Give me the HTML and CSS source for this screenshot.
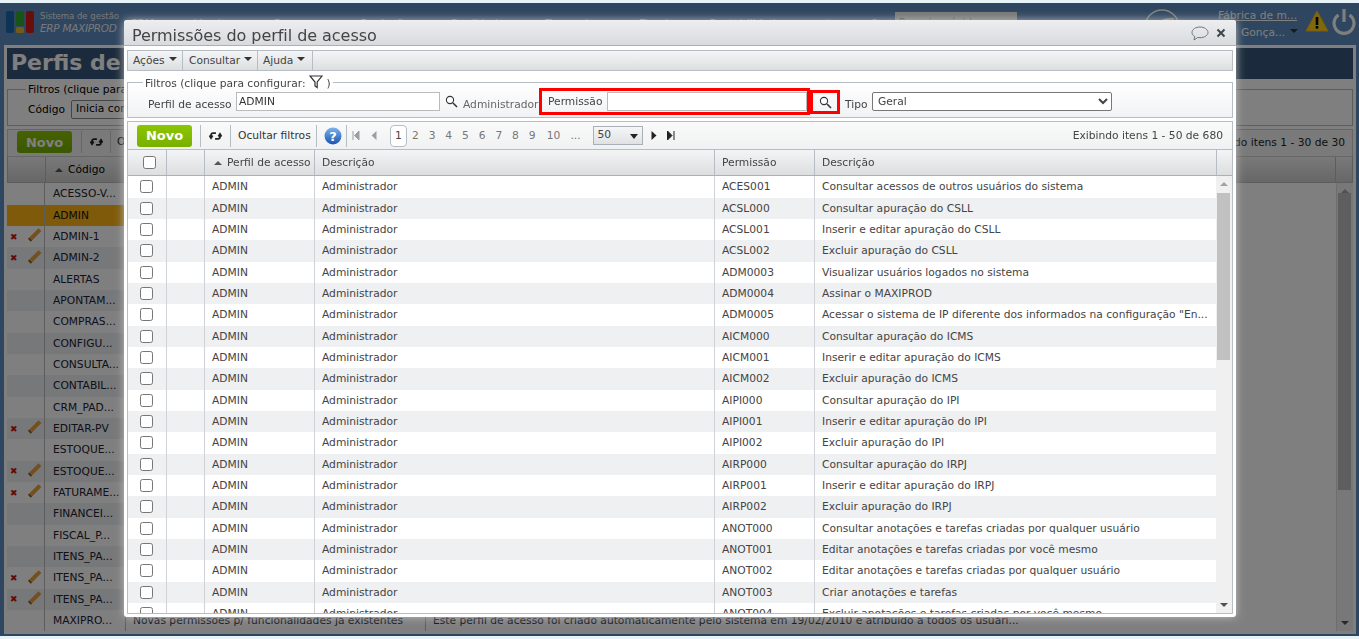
FILE: index.html
```html
<!DOCTYPE html>
<html lang="pt-BR">
<head>
<meta charset="utf-8">
<title>Permissões do perfil de acesso</title>
<link rel="stylesheet" href="styles.css">
</head>
<body>
<div class="page">
  <header class="top">
    <div class="logo">
      <svg width="30" height="23" viewBox="0 0 30 23"><rect x="0" y="0" width="8" height="22" rx="2" fill="#1a68ae"/><rect x="10" y="0" width="8" height="15" rx="2" fill="#35a82a"/><rect x="10" y="16" width="8" height="6" rx="1.500" fill="#e8b82c"/><rect x="20" y="0" width="8" height="22" rx="2" fill="#d41a1a"/></svg>
      <div class="logo-text"><span>Sistema de gestão</span><b>ERP MAXIPROD</b></div>
    </div>
    <nav class="menu"><span>CRM</span><span>Vendas</span><span>Compras</span><span>Produção</span><span>Qualidade</span><span>Financeiro</span><span>Fiscal</span><span>Contabilidade</span><span>⚙</span><span>?</span></nav>
    <div class="quick">Pesquisa rápida</div>
    <svg class="swirl" width="38" height="38" viewBox="0 0 38 38"><circle cx="19" cy="19" r="17" fill="none" stroke="#fff" stroke-width="1.500"/><path d="M7 24c6-10 14-14 24-13M10 28c6-8 12-11 20-11" fill="none" stroke="#fff" stroke-width="1.500"/></svg>
    <div class="user"><a>Fábrica de m...</a><span>Gonça...<i class="caret ucaret"></i></span></div>
    <svg class="warn" width="24" height="22" viewBox="0 0 24 22"><path d="M12 1 23 21H1Z" fill="#fdd21a" stroke="#fdb514"/><rect x="10.700" y="7" width="2.600" height="8" fill="#000"/><rect x="10.700" y="16" width="2.600" height="2.600" fill="#000"/></svg>
    <svg class="power" width="24" height="27" viewBox="0 0 24 27"><path d="M6.500 7a10 10 0 1 0 11 0" fill="none" stroke="#fff" stroke-width="3.200"/><path d="M12 1v13" stroke="#fff" stroke-width="3.200"/></svg>
  </header>
  <main class="panel">
    <h1 class="ptitle">Perfis de acesso</h1>
    <fieldset class="pfilter"><legend>Filtros (clique para configurar:)</legend><label>Código</label><span class="fake-input">Inicia com</span></fieldset>
    <div class="ptools"><button class="novo">Novo</button><span class="sep sep1"><svg width="13" height="12" viewBox="0 0 16 14"><path d="M8.500 3.500H5C3.200 3.500 2.500 4.700 2.500 6.500V9M.5 6.500 2.500 9.500 4.500 6.500M7.500 10.500H11c1.800 0 2.500-1.200 2.500-3V5M11.500 7.500l2-3 2 3" fill="none" stroke="#222" stroke-width="2.200"/></svg></span><span class="sep">Ocultar filtros</span><span class="count">Exibindo itens 1 - 30 de 30</span></div>
    <div class="phead"><span class="pc1"></span><span class="pc2"><i class="up"></i>Código</span><span class="pc3"></span><span class="pc4"></span></div>
    <div class="pbody">
      <div class="prow"><span class="pc1"></span><span class="pc2">ACESSO-V...</span></div>
      <div class="prow sel"><span class="pc1"></span><span class="pc2">ADMIN</span></div>
      <div class="prow"><span class="pc1"><i class="x">✖</i><i class="pen"></i></span><span class="pc2">ADMIN-1</span></div>
      <div class="prow"><span class="pc1"><i class="x">✖</i><i class="pen"></i></span><span class="pc2">ADMIN-2</span></div>
      <div class="prow"><span class="pc1"></span><span class="pc2">ALERTAS</span></div>
      <div class="prow"><span class="pc1"></span><span class="pc2">APONTAM...</span></div>
      <div class="prow"><span class="pc1"></span><span class="pc2">COMPRAS...</span></div>
      <div class="prow"><span class="pc1"></span><span class="pc2">CONFIGU...</span></div>
      <div class="prow"><span class="pc1"></span><span class="pc2">CONSULTA...</span></div>
      <div class="prow"><span class="pc1"></span><span class="pc2">CONTABIL...</span></div>
      <div class="prow"><span class="pc1"></span><span class="pc2">CRM_PAD...</span></div>
      <div class="prow"><span class="pc1"><i class="x">✖</i><i class="pen"></i></span><span class="pc2">EDITAR-PV</span></div>
      <div class="prow"><span class="pc1"></span><span class="pc2">ESTOQUE...</span></div>
      <div class="prow"><span class="pc1"><i class="x">✖</i><i class="pen"></i></span><span class="pc2">ESTOQUE...</span></div>
      <div class="prow"><span class="pc1"><i class="x">✖</i><i class="pen"></i></span><span class="pc2">FATURAME...</span></div>
      <div class="prow"><span class="pc1"></span><span class="pc2">FINANCEI...</span></div>
      <div class="prow"><span class="pc1"></span><span class="pc2">FISCAL_P...</span></div>
      <div class="prow"><span class="pc1"></span><span class="pc2">ITENS_PA...</span></div>
      <div class="prow"><span class="pc1"><i class="x">✖</i><i class="pen"></i></span><span class="pc2">ITENS_PA...</span></div>
      <div class="prow"><span class="pc1"><i class="x">✖</i><i class="pen"></i></span><span class="pc2">ITENS_PA...</span></div>
      <div class="prow"><span class="pc1"></span><span class="pc2">MAXIPRO...</span><span class="pc3">Novas permissões p/ funcionalidades já existentes</span><span class="pc4">Este perfil de acesso foi criado automaticamente pelo sistema em 19/02/2010 e atribuído a todos os usuári...</span></div>
      <div class="pscroll"><i class="arrow-up"></i><i class="pthumb"></i><i class="arrow-down"></i></div>
    </div>
  </main>
</div>
<div class="overlay"></div>
<section class="modal">
  <div class="mtitle"><h2>Permissões do perfil de acesso</h2>
    <svg class="bubble" width="18" height="15" viewBox="0 0 18 15"><path d="M9 1C4.600 1 1 3.400 1 6.500c0 1.700 1.100 3.100 2.800 4.100L3 14l3.600-2.500c.8.100 1.600.2 2.400.2 4.400 0 8-2.300 8-5.200S13.400 1 9 1Z" fill="none" stroke="#6d7680"/></svg>
    <svg class="close" width="10" height="10" viewBox="0 0 10 10"><path d="M1.500 1.500l7 7M8.500 1.500l-7 7" stroke="#3d454d" stroke-width="2"/></svg>
  </div>
  <div class="mmenu"><span class="m1">Ações <i class="caret"></i></span><span class="m2">Consultar <i class="caret"></i></span><span class="m3">Ajuda <i class="caret"></i></span></div>
  <fieldset class="mfilter">
    <legend>Filtros (clique para configurar: <svg class="funnel" width="14" height="14" viewBox="0 0 14 14"><path d="M1 1h12L8.200 7v5.500L6 11V7Z" fill="none" stroke="#333" stroke-width="1.200"/></svg> )</legend>
    <label class="l1">Perfil de acesso</label><span class="inp i1">ADMIN</span>
    <svg class="lens" width="13" height="13" viewBox="0 0 13 13"><circle cx="5" cy="5" r="3.600" fill="#fff" stroke="#333" stroke-width="1.100"/><path d="M8 8l4 4" stroke="#333" stroke-width="1.600"/></svg>
    <span class="adm">Administrador</span>
    <div class="red red1"><label>Permissão</label><span class="inp i2"></span></div>
    <div class="red red2"><svg class="lens" width="13" height="13" viewBox="0 0 13 13"><circle cx="5" cy="5" r="3.600" fill="#fff" stroke="#333" stroke-width="1.100"/><path d="M8 8l4 4" stroke="#333" stroke-width="1.600"/></svg></div>
    <label class="l3">Tipo</label>
    <select class="tipo"><option>Geral</option></select>
  </fieldset>
  <div class="mtools">
    <button class="novo">Novo</button>
    <span class="tsep t1"><svg width="13" height="12" viewBox="0 0 16 14"><path d="M8.500 3.500H5C3.200 3.500 2.500 4.700 2.500 6.500V9M.5 6.500 2.500 9.500 4.500 6.500M7.500 10.500H11c1.800 0 2.500-1.200 2.500-3V5M11.500 7.500l2-3 2 3" fill="none" stroke="#222" stroke-width="2.200"/></svg></span>
    <span class="tsep t2">Ocultar filtros</span>
    <span class="tsep t3"><svg width="18" height="18" viewBox="0 0 18 18"><defs><linearGradient id="hb" x1="0" y1="0" x2="0" y2="1"><stop offset="0" stop-color="#7fb2ee"/><stop offset="1" stop-color="#1556b0"/></linearGradient></defs><circle cx="9" cy="9" r="8.500" fill="url(#hb)"/><text x="9" y="13.500" text-anchor="middle" class="qm">?</text></svg></span>
    <div class="pager">
      <svg width="8" height="9" viewBox="0 0 8 9"><path d="M1 0v9M7 0v9L2.500 4.500Z" stroke="#9aa0a6" fill="#9aa0a6"/></svg>
      <svg class="pprev" width="6" height="9" viewBox="0 0 6 9"><path d="M5.500 0v9L.5 4.500Z" fill="#9aa0a6"/></svg>
      <span class="pg cur">1</span><span class="pg">2</span><span class="pg">3</span><span class="pg">4</span><span class="pg">5</span><span class="pg">6</span><span class="pg">7</span><span class="pg">8</span><span class="pg">9</span><span class="pg pg10">10</span><span class="pg pgd">...</span>
      <span class="psize">50<i class="caret dark"></i></span>
      <svg class="pnext" width="6" height="9" viewBox="0 0 6 9"><path d="M.5 0v9l5-4.500Z" fill="#222"/></svg>
      <svg class="plast" width="8" height="9" viewBox="0 0 8 9"><path d="M.5 0v9L5 4.500ZM7 0v9" stroke="#222" fill="#222"/></svg>
    </div>
    <span class="mcount">Exibindo itens 1 - 50 de 680</span>
  </div>
  <div class="grid">
    <div class="ghead">
      <span class="c0"><i class="cb"></i></span><span class="c1"></span><span class="c2"><i class="up"></i>Perfil de acesso</span><span class="c3">Descrição</span><span class="c4">Permissão</span><span class="c5">Descrição</span><span class="c6"></span>
    </div>
    <div class="gbody">
      <div class="rows">
        <div class="row"><span class="c0"><i class="cb"></i></span><span class="c1"></span><span class="c2">ADMIN</span><span class="c3">Administrador</span><span class="c4">ACES001</span><span class="c5">Consultar acessos de outros usuários do sistema</span></div>
        <div class="row"><span class="c0"><i class="cb"></i></span><span class="c1"></span><span class="c2">ADMIN</span><span class="c3">Administrador</span><span class="c4">ACSL000</span><span class="c5">Consultar apuração do CSLL</span></div>
        <div class="row"><span class="c0"><i class="cb"></i></span><span class="c1"></span><span class="c2">ADMIN</span><span class="c3">Administrador</span><span class="c4">ACSL001</span><span class="c5">Inserir e editar apuração do CSLL</span></div>
        <div class="row"><span class="c0"><i class="cb"></i></span><span class="c1"></span><span class="c2">ADMIN</span><span class="c3">Administrador</span><span class="c4">ACSL002</span><span class="c5">Excluir apuração do CSLL</span></div>
        <div class="row"><span class="c0"><i class="cb"></i></span><span class="c1"></span><span class="c2">ADMIN</span><span class="c3">Administrador</span><span class="c4">ADM0003</span><span class="c5">Visualizar usuários logados no sistema</span></div>
        <div class="row"><span class="c0"><i class="cb"></i></span><span class="c1"></span><span class="c2">ADMIN</span><span class="c3">Administrador</span><span class="c4">ADM0004</span><span class="c5">Assinar o MAXIPROD</span></div>
        <div class="row"><span class="c0"><i class="cb"></i></span><span class="c1"></span><span class="c2">ADMIN</span><span class="c3">Administrador</span><span class="c4">ADM0005</span><span class="c5">Acessar o sistema de IP diferente dos informados na configuração "En...</span></div>
        <div class="row"><span class="c0"><i class="cb"></i></span><span class="c1"></span><span class="c2">ADMIN</span><span class="c3">Administrador</span><span class="c4">AICM000</span><span class="c5">Consultar apuração do ICMS</span></div>
        <div class="row"><span class="c0"><i class="cb"></i></span><span class="c1"></span><span class="c2">ADMIN</span><span class="c3">Administrador</span><span class="c4">AICM001</span><span class="c5">Inserir e editar apuração do ICMS</span></div>
        <div class="row"><span class="c0"><i class="cb"></i></span><span class="c1"></span><span class="c2">ADMIN</span><span class="c3">Administrador</span><span class="c4">AICM002</span><span class="c5">Excluir apuração do ICMS</span></div>
        <div class="row"><span class="c0"><i class="cb"></i></span><span class="c1"></span><span class="c2">ADMIN</span><span class="c3">Administrador</span><span class="c4">AIPI000</span><span class="c5">Consultar apuração do IPI</span></div>
        <div class="row"><span class="c0"><i class="cb"></i></span><span class="c1"></span><span class="c2">ADMIN</span><span class="c3">Administrador</span><span class="c4">AIPI001</span><span class="c5">Inserir e editar apuração do IPI</span></div>
        <div class="row"><span class="c0"><i class="cb"></i></span><span class="c1"></span><span class="c2">ADMIN</span><span class="c3">Administrador</span><span class="c4">AIPI002</span><span class="c5">Excluir apuração do IPI</span></div>
        <div class="row"><span class="c0"><i class="cb"></i></span><span class="c1"></span><span class="c2">ADMIN</span><span class="c3">Administrador</span><span class="c4">AIRP000</span><span class="c5">Consultar apuração do IRPJ</span></div>
        <div class="row"><span class="c0"><i class="cb"></i></span><span class="c1"></span><span class="c2">ADMIN</span><span class="c3">Administrador</span><span class="c4">AIRP001</span><span class="c5">Inserir e editar apuração do IRPJ</span></div>
        <div class="row"><span class="c0"><i class="cb"></i></span><span class="c1"></span><span class="c2">ADMIN</span><span class="c3">Administrador</span><span class="c4">AIRP002</span><span class="c5">Excluir apuração do IRPJ</span></div>
        <div class="row"><span class="c0"><i class="cb"></i></span><span class="c1"></span><span class="c2">ADMIN</span><span class="c3">Administrador</span><span class="c4">ANOT000</span><span class="c5">Consultar anotações e tarefas criadas por qualquer usuário</span></div>
        <div class="row"><span class="c0"><i class="cb"></i></span><span class="c1"></span><span class="c2">ADMIN</span><span class="c3">Administrador</span><span class="c4">ANOT001</span><span class="c5">Editar anotações e tarefas criadas por você mesmo</span></div>
        <div class="row"><span class="c0"><i class="cb"></i></span><span class="c1"></span><span class="c2">ADMIN</span><span class="c3">Administrador</span><span class="c4">ANOT002</span><span class="c5">Editar anotações e tarefas criadas por qualquer usuário</span></div>
        <div class="row"><span class="c0"><i class="cb"></i></span><span class="c1"></span><span class="c2">ADMIN</span><span class="c3">Administrador</span><span class="c4">ANOT003</span><span class="c5">Criar anotações e tarefas</span></div>
        <div class="row"><span class="c0"><i class="cb"></i></span><span class="c1"></span><span class="c2">ADMIN</span><span class="c3">Administrador</span><span class="c4">ANOT004</span><span class="c5">Excluir anotações e tarefas criadas por você mesmo</span></div>
      </div>
      <div class="scroll"><i class="arrow-up"></i><i class="thumb"></i><i class="arrow-down"></i></div>
    </div>
  </div>
</section>
</body>
</html>
```
FILE: styles.css
```css
* { box-sizing: border-box; }
html, body { margin: 0; height: 100%; overflow: hidden; background: #e6f3f8; }
body, button, select { font-family: "DejaVu Sans", sans-serif; font-size: 10.7px; }
i { font-style: normal; }
.page { height: 639px; padding: 3px 0; overflow: hidden; display: flex; flex-direction: column; background: #5c8cc0; background-clip: content-box; }
.top { height: 41px; flex: none; display: flex; align-items: flex-start; color: #fff; }
.logo { display: flex; gap: 4px; padding: 8px 0 0 6px; width: 130px; flex: none; }
.logo-text { display: flex; flex-direction: column; font-size: 8.500px; color: #f0f0f0; line-height: 12px; white-space: nowrap; margin-top: -1px; }
.logo-text b { font-style: italic; font-weight: 400; font-size: 10.500px; color: #f0f0f0; letter-spacing: -.3px; }
.menu { display: flex; gap: 22px; padding-top: 14px; width: 765px; flex: none; color: #fff; white-space: nowrap; overflow: hidden; }
.menu span::after { content: ""; display: inline-block; margin-left: 10px; border: 4px solid transparent; border-top: 5px solid #fff; border-bottom: 0; vertical-align: 2px; }
.quick { width: 122px; height: 20px; margin-top: 9px; background: #f0f0f0; color: #888; font-size: 10px; padding: 5px 0 0 4px; flex: none; }
.swirl { margin: 5px 0 0 126px; flex: none; }
.user { margin-left: 37px; width: 81px; flex: none; display: flex; flex-direction: column; line-height: 17px; padding-top: 4px; white-space: nowrap; }
.user a { text-decoration: underline; }
.user span { display: flex; align-items: center; gap: 5px; padding-left: 23px; }
.ucaret { border-top-color: #fff; }
.warn { margin: 7px 0 0 6px; flex: none; }
.power { margin: 5px 0 0 3px; flex: none; }
.panel { flex: 1; margin: 1px 3px 2px 4px; border: 3px solid #fff; background: #fff; display: flex; flex-direction: column; min-height: 0; }
.ptitle { margin: 0; height: 31px; flex: none; background: #36577a; color: #fff; font-size: 22px; line-height: 30px; padding-left: 4px; font-family: "DejaVu Sans", sans-serif; }
.pfilter { margin: 4px 0 0; height: 43px; flex: none; border: 1px solid #bbb; padding: 4px 0 0 20px; display: flex; align-items: center; gap: 6px; }
.pfilter legend { padding: 0 2px; margin-left: -2px; }
.fake-input { border: 1px solid #888; padding: 1px 4px; width: 200px; height: 19px; border-radius: 2px; }
.ptools { height: 28px; flex: none; margin-top: 3px; border: 1px solid #ccc; display: flex; align-items: center; padding: 0 0 2px 9px; background: #f4f4f4; }
.count { margin-left: auto; padding-right: 7px; color: #222; }
.sep { padding: 0 6px; border-left: 1px solid #ccc; height: 22px; line-height: 22px; display: flex; align-items: center; white-space: nowrap; }
.sep1 { margin-left: 9px; width: 29px; padding-left: 8px; }
.phead { height: 26px; flex: none; background: linear-gradient(#f2f2f2, #cfcfcf); display: flex; align-items: center; border: 1px solid #bbb; border-top: 0; }
.pbody { flex: 1; position: relative; overflow: hidden; padding-top: .33px; }
.prow { height: 21.330px; display: flex; align-items: center; color: #223; background: #fff; }
.prow .pc1, .prow .pc2 { height: 100%; display: flex; align-items: center; background: #fff; }
.prow:nth-child(even) .pc1, .prow:nth-child(even) .pc2 { background: #eff0f2; }
.prow.sel .pc1, .prow.sel .pc2 { background: #fdb514; color: #111; }
.pc1 { width: 38px; flex: none; border-right: 1px solid #bbb; height: 100%; display: flex; align-items: center; gap: 9px; padding-left: 3px; }
.pc2 { width: 80px; flex: none; padding-left: 8px; white-space: nowrap; overflow: hidden; }
.phead .pc2 { display: flex; align-items: center; padding-left: 9px; }
.pc3 { width: 300px; flex: none; border-left: 1px solid #bbb; height: 100%; padding-left: 7px; line-height: 21px; white-space: nowrap; overflow: hidden; }
.pc4 { flex: 1; border-left: 1px solid #bbb; padding-left: 7px; height: 100%; line-height: 21px; white-space: nowrap; overflow: hidden; }
.phead .pc4 { border-right: 1px solid #bbb; margin-right: 16px; }
.x { color: #c41414; font-size: 9px; }
.pen { width: 15px; height: 3.500px; background: linear-gradient(90deg, #8a5a20 0 2px, #e6a040 2px); transform: rotate(-45deg); display: block; margin-top: -3px; }
.pscroll { position: absolute; top: 0; right: 0; bottom: 0; width: 17px; background: #f0f0f0; border-left: 1px solid #ddd; }
.pthumb { position: absolute; top: 10px; bottom: 141px; left: 1px; right: 2px; background: #bdbdbd; }
.overlay { position: fixed; left: 0; right: 0; top: 3px; bottom: 3px; background: rgba(0,0,0,.5); }
.modal { position: fixed; left: 124px; top: 20px; width: 1112px; height: 597px; background: #fff; border-radius: 3px; padding: 0 3px 3px; display: flex; flex-direction: column; box-shadow: 0 0 10px rgba(255,255,255,.7), 0 0 12px rgba(0,0,0,.3); color: #444; }
.mtitle { height: 26px; flex: none; margin: 0 -3px; background: linear-gradient(#eceef0, #d8dadd); border-bottom: 1px solid #a9b0b8; display: flex; align-items: center; padding: 5px 10px 0 8px; border-radius: 3px 3px 0 0; }
.mtitle h2 { margin: 0; font-weight: 400; font-size: 16px; color: #444; flex: 1; letter-spacing: -.05px; }
.bubble { margin-top: -4px; }
.close { margin: -4px 0 0 7px; }
.mmenu { height: 21px; flex: none; margin-top: 4px; background: linear-gradient(#f4f5f6, #dcdee0); border: 1px solid #b7bdc4; display: flex; }
.mmenu span { padding-left: 5px; border-right: 1px solid #b7bdc4; line-height: 20px; display: flex; align-items: center; gap: 4px; }
.m1 { width: 55px; }
.mmenu .m2 { width: 75px; padding-left: 6px; }
.m3 { width: 55px; }
.caret { display: inline-block; width: 0; height: 0; border: 4px solid transparent; border-top: 4px solid #333; border-bottom: 0; margin-top: -3px; }
.mfilter { position: relative; margin: 4px 0 0; height: 43px; flex: none; border: 1px solid #b7bdc4; padding: 0; background: linear-gradient(#fff, #f1f2f4); display: block; }
.mfilter legend { margin-left: 15px; padding: 0 2px; line-height: 13px; white-space: nowrap; }
.funnel { vertical-align: -2px; }
.mfilter > .lens, .mfilter > label, .mfilter > .inp, .adm, .red, .tipo { position: absolute; }
.l1 { left: 20px; top: 8px; }
.inp { background: #fff; border: 1px solid #bbb; height: 19px; line-height: 17px; padding: 0 2px; color: #333; display: block; }
.i1 { left: 108px; top: 2px; width: 204px; }
.mfilter > .lens { left: 317px; top: 5px; }
.adm { left: 335px; top: 8px; color: #666; }
.red { border: 3px solid #f00; }
.red1 { left: 411px; top: -2px; width: 271px; height: 27px; display: flex; align-items: center; padding-left: 6px; }
.red1 label { width: 59px; flex: none; color: #444; }
.i2 { flex: none; width: 200px; margin-top: -1px; height: 19px; }
.red2 { left: 682px; top: 0; width: 30px; height: 24px; display: flex; align-items: center; justify-content: center; }
.l3 { left: 717px; top: 8px; }
.tipo { left: 744px; top: 2px; width: 240px; height: 19px; padding-left: 1px; background: #fff; border: 1px solid #777; border-radius: 2px; color: #444; }
.mtools { height: 28px; flex: none; margin-top: 3px; border: 1px solid #b7bdc4; border-bottom: 0; display: flex; align-items: center; background: linear-gradient(#fafafa, #f0f1f2); padding-left: 9px; }
.novo { width: 55px; height: 22px; flex: none; border: 0; border-radius: 3px; background: linear-gradient(#8cc500, #78b000); color: #fff; font-weight: 700; font-size: 13px; font-family: "DejaVu Sans", sans-serif; padding: 0; }
.tsep { border-left: 1px solid #b7bdc4; height: 22px; display: flex; align-items: center; flex: none; white-space: nowrap; }
.t1 { margin-left: 8px; width: 30px; padding-left: 8px; }
.t2 { width: 86px; padding-left: 7px; color: #333; }
.t3 { width: 30px; padding-left: 7px; }
.qm { fill: #fff; font-weight: 700; font-size: 13px; font-family: "DejaVu Sans", sans-serif; }
.pager { display: flex; align-items: center; border-left: 1px solid #b7bdc4; height: 22px; padding-left: 5px; color: #777; }
.pprev { margin-left: 11px; }
.pg { width: 16.700px; text-align: center; }
.pg.cur { width: 17px; height: 22px; border: 1px solid #b7bdc4; border-radius: 4px; line-height: 20px; margin-left: 13px; color: #444; background: #fff; }
.pg10 { width: 22px; margin-left: 2px; }
.pgd { width: 22px; }
.psize { width: 50px; height: 19px; margin-left: 6px; border: 1px solid #a9b0b8; background: linear-gradient(#f5f6f7, #dfe1e3); display: flex; align-items: center; justify-content: space-between; padding: 0 4px 2px; color: #444; }
.caret.dark { border-width: 5px 4px 0; margin-top: 4px; border-top-color: #222; }
.pnext { margin-left: 8px; }
.plast { margin-left: 10px; }
.mcount { margin-left: auto; padding-right: 9px; color: #444; }
.grid { flex: 1; min-height: 0; display: flex; flex-direction: column; border: 1px solid #b7bdc4; }
.ghead { height: 26px; flex: none; display: flex; background: linear-gradient(#f3f4f5, #dcdee0); border-bottom: 1px solid #a9b0b8; }
.ghead > span { display: flex; align-items: center; border-right: 1px solid #b7bdc4; white-space: nowrap; overflow: hidden; }
.c0 { width: 39px; flex: none; }
.c1 { width: 38px; flex: none; }
.c2 { width: 110px; flex: none; padding-left: 7px; }
.c3 { width: 400px; flex: none; padding-left: 7px; }
.c4 { width: 100px; flex: none; padding-left: 7px; }
.c5 { flex: 1; padding-left: 7px; min-width: 0; }
.c6 { width: 16px; flex: none; border-right: 0 !important; }
.ghead .c5 { width: 402px; flex: none; }
.ghead .c0 { padding-left: 15px; }
.ghead .c2 { padding-left: 9px; }
.up { display: inline-block; width: 0; height: 0; border: 4px solid transparent; border-bottom: 4px solid #555; border-top: 0; margin-right: 5px; flex: none; }
.cb { display: block; width: 13px; height: 13px; border: 1px solid #767676; border-radius: 2.500px; background: #fff; }
.gbody { flex: 1; min-height: 0; display: flex; overflow: hidden; }
.rows { flex: 1; min-width: 0; overflow: hidden; padding-top: .33px; }
.row { height: 21.330px; display: flex; align-items: center; background: #fff; color: #444; white-space: nowrap; }
.row:nth-child(even) { background: #eff0f2; }
.row > span { height: 100%; display: flex; align-items: center; border-right: 1px solid #cfd3d8; }
.row .c0 { padding-left: 12px; }
.row .c5 { border-right: 0; }
.scroll { width: 16px; flex: none; background: #f0f0f0; position: relative; }
.thumb { position: absolute; left: 1px; right: 2px; top: 17px; height: 167px; background: #c1c1c1; }
.arrow-up, .arrow-down { position: absolute; left: 4px; width: 0; height: 0; border: 4px solid transparent; }
.arrow-up { top: 6px; border-top: 0; border-bottom: 4px solid #a3a3a3; }
.arrow-down { bottom: 6px; border-bottom: 0; border-top: 4px solid #505050; }
```
